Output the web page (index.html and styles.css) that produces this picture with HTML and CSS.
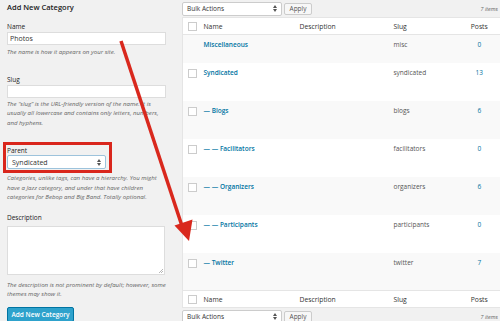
FILE: index.html
```html
<!DOCTYPE html>
<html lang="en">
<head>
  <meta charset="UTF-8">
  <title>Categories</title>
  <link rel="stylesheet" href="styles.css">
</head>
<body>
  <div class="page">
    <div class="col-left">
      <h3>Add New Category</h3>
      <div class="form-field">
        <label>Name</label>
        <div class="input">Photos</div>
        <p>The name is how it appears on your site.</p>
      </div>
      <div class="form-field">
        <label>Slug</label>
        <div class="input"></div>
        <p>The &ldquo;slug&rdquo; is the URL-friendly version of the name. It is usually all lowercase and contains only letters, numbers, and hyphens.</p>
      </div>
      <div class="form-field parent-field">
        <div class="highlight">
          <label>Parent</label>
          <div class="select">Syndicated
            <svg class="updown" width="4" height="7" viewBox="0 0 4 7"><path d="M0 3 L2 0 L4 3 Z M0 4 L2 7 L4 4 Z" fill="#555"/></svg>
          </div>
        </div>
        <p>Categories, unlike tags, can have a hierarchy. You might have a Jazz category, and under that have children categories for Bebop and Big Band. Totally optional.</p>
      </div>
      <div class="form-field">
        <label>Description</label>
        <div class="textarea">
          <svg class="grip" width="4" height="4" viewBox="0 0 4 4"><path d="M4 0 L0 4 M4 2 L2 4" stroke="#999" stroke-width="0.7"/></svg>
        </div>
        <p>The description is not prominent by default; however, some themes may show it.</p>
      </div>
      <button class="btn-primary">Add New Category</button>
    </div>

    <div class="col-right">
      <div class="tablenav">
        <div class="select bulk">Bulk Actions
          <svg class="updown" width="4" height="7" viewBox="0 0 4 7"><path d="M0 3 L2 0 L4 3 Z M0 4 L2 7 L4 4 Z" fill="#555"/></svg>
        </div>
        <button class="btn">Apply</button>
        <span class="count">7 items</span>
      </div>
      <table class="list">
        <thead>
          <tr><th class="cb"><span class="check"></span></th><th class="c-name">Name</th><th class="c-desc">Description</th><th class="c-slug">Slug</th><th class="c-posts">Posts</th></tr>
        </thead>
        <tbody>
          <tr class="alt short"><td class="cb"></td><td class="c-name"><a>Miscellaneous</a></td><td></td><td class="c-slug">misc</td><td class="c-posts"><a>0</a></td></tr>
          <tr><td class="cb"><span class="check"></span></td><td class="c-name"><a>Syndicated</a></td><td></td><td class="c-slug">syndicated</td><td class="c-posts"><a>13</a></td></tr>
          <tr class="alt"><td class="cb"><span class="check"></span></td><td class="c-name"><a>&mdash; Blogs</a></td><td></td><td class="c-slug">blogs</td><td class="c-posts"><a>6</a></td></tr>
          <tr><td class="cb"><span class="check"></span></td><td class="c-name"><a>&mdash; &mdash; Facilitators</a></td><td></td><td class="c-slug">facilitators</td><td class="c-posts"><a>0</a></td></tr>
          <tr class="alt"><td class="cb"><span class="check"></span></td><td class="c-name"><a>&mdash; &mdash; Organizers</a></td><td></td><td class="c-slug">organizers</td><td class="c-posts"><a>6</a></td></tr>
          <tr><td class="cb"><span class="check"></span></td><td class="c-name"><a>&mdash; &mdash; Participants</a></td><td></td><td class="c-slug">participants</td><td class="c-posts"><a>0</a></td></tr>
          <tr class="alt"><td class="cb"><span class="check"></span></td><td class="c-name"><a>&mdash; Twitter</a></td><td></td><td class="c-slug">twitter</td><td class="c-posts"><a>7</a></td></tr>
        </tbody>
        <tfoot>
          <tr><th class="cb"><span class="check"></span></th><th class="c-name">Name</th><th class="c-desc">Description</th><th class="c-slug">Slug</th><th class="c-posts">Posts</th></tr>
        </tfoot>
      </table>
      <div class="tablenav">
        <div class="select bulk">Bulk Actions
          <svg class="updown" width="4" height="7" viewBox="0 0 4 7"><path d="M0 3 L2 0 L4 3 Z M0 4 L2 7 L4 4 Z" fill="#555"/></svg>
        </div>
        <button class="btn">Apply</button>
        <span class="count">7 items</span>
      </div>
    </div>
  </div>

  <!-- annotation arrow drawn over the screenshot -->
  <svg class="arrow" width="500" height="321" viewBox="0 0 500 321">
    <line x1="121" y1="41" x2="182" y2="226" stroke="#d9281d" stroke-width="3.5"/>
    <polygon points="189,241 192.5,219.5 174.5,225.5" fill="#d9281d"/>
  </svg>
</body>
</html>
```

FILE: styles.css
```css
* { box-sizing: border-box; }
html, body {
  margin: 0;
  height: 100%;
  overflow: hidden;
}
body {
  background: #f1f1f1;
  font-family: 'Open Sans', sans-serif;
  color: #444;
  font-size: 6.5px;
}
.page {
  display: flex;
  width: 500px;
}
.col-left {
  width: 182px;
  flex-shrink: 0;
  padding: 0 16px 0 7px;
}
.col-right {
  width: 330px;
  flex-shrink: 0;
}
h3 {
  margin: 2px 0 0;
  font-size: 7.5px;
  font-weight: 600;
  color: #222;
  line-height: 10px;
}
.form-field label {
  display: block;
  color: #222;
  font-size: 6.5px;
  line-height: 9px;
}
.form-field p {
  margin: 0;
  font-style: italic;
  color: #666;
  font-size: 6.1px;
  line-height: 9.5px;
}
.form-field:nth-of-type(1) { margin-top: 10px; }
.form-field:nth-of-type(1) label { margin-bottom: 1px; }
.form-field:nth-of-type(1) p { margin-top: 2px; }
.form-field:nth-of-type(2) { margin-top: 18px; }
.form-field:nth-of-type(2) label { margin-bottom: 1px; }
.form-field:nth-of-type(2) p { margin-top: 1px; }
.input {
  height: 13px;
  width: 159px;
  background: #fff;
  border: 1px solid #ddd;
  font-size: 7px;
  line-height: 11px;
  padding-left: 2px;
  color: #333;
}
.parent-field { margin-top: 15px; }
.highlight {
  margin-left: -4px;
  width: 109px;
  height: 31px;
  border: 3px solid #d9261c;
  padding: 1px 0 0 1px;
}
.highlight label { margin-bottom: 0; }
.select {
  display: flex;
  align-items: center;
  justify-content: space-between;
  width: 99px;
  height: 14px;
  background: #fff;
  border: 1px solid #ccc;
  border-radius: 2px;
  font-size: 7px;
  color: #333;
  padding: 0 4px 0 4px;
}
.highlight .select { border-color: #9dc3dc; }
.parent-field p { margin-top: 0; }
.form-field:nth-of-type(4) { margin-top: 11px; }
.form-field:nth-of-type(4) label { margin-bottom: 4px; }
.textarea {
  position: relative;
  width: 158px;
  height: 49px;
  background: #fff;
  border: 1px solid #ddd;
}
.grip {
  position: absolute;
  right: 1px;
  bottom: 1px;
}
.form-field:nth-of-type(4) p { margin-top: 5px; }
.btn-primary {
  margin-top: 8px;
  display: block;
  width: 67px;
  height: 15px;
  padding: 0;
  background: #2ea2cc;
  border: 1px solid #0074a2;
  border-radius: 2px;
  color: #fff;
  font-family: inherit;
  font-size: 6.5px;
  font-weight: 600;
}
.tablenav {
  display: flex;
  align-items: center;
  height: 17px;
  padding-left: 0;
  padding-right: 14px;
}
.tablenav .bulk {
  width: 100px;
  height: 14px;
  font-size: 6.5px;
}
.btn {
  margin-left: 2px;
  width: 28px;
  height: 12px;
  padding: 0;
  background: #f7f7f7;
  border: 1px solid #ccc;
  border-radius: 2px;
  font-family: inherit;
  font-size: 6.5px;
  color: #555;
}
.count {
  margin-left: auto;
  font-style: italic;
  font-size: 5.5px;
  color: #666;
}
.list {
  border-collapse: collapse;
  width: 330px;
  background: #fff;
  border: 1px solid #e5e5e5;
  table-layout: fixed;
}
.list th {
  text-align: left;
  font-weight: 400;
  color: #333;
  font-size: 6.8px;
  height: 17px;
  padding: 0;
}
.list thead tr { border-bottom: 1px solid #e5e5e5; }
.list tfoot tr { border-top: 1px solid #e5e5e5; }
.list td {
  height: 38px;
  vertical-align: top;
  padding: 5px 0 0;
  font-size: 6.5px;
  color: #555;
}
.list tr.short td { height: 28px; }
.list tr.alt { background: #f9f9f9; }
.list .cb { width: 21px; padding-left: 5px; }
.list .c-name { width: 96px; }
.list .c-desc { width: 94px; }
.list .c-slug { width: 77px; }
.list .c-posts { width: 42px; text-align: center; padding-right: 24px; }
.list td.c-posts { padding-right: 24px; }
.list a {
  color: #0074a2;
  font-weight: 600;
}
.list td.c-posts a { font-weight: 400; }
.check {
  display: block;
  width: 9px;
  height: 9px;
  border: 1px solid #ccc;
  background: #fff;
}
.list td .check { margin-top: 1px; }
.arrow {
  position: absolute;
  left: 0;
  top: 0;
  pointer-events: none;
}
```
